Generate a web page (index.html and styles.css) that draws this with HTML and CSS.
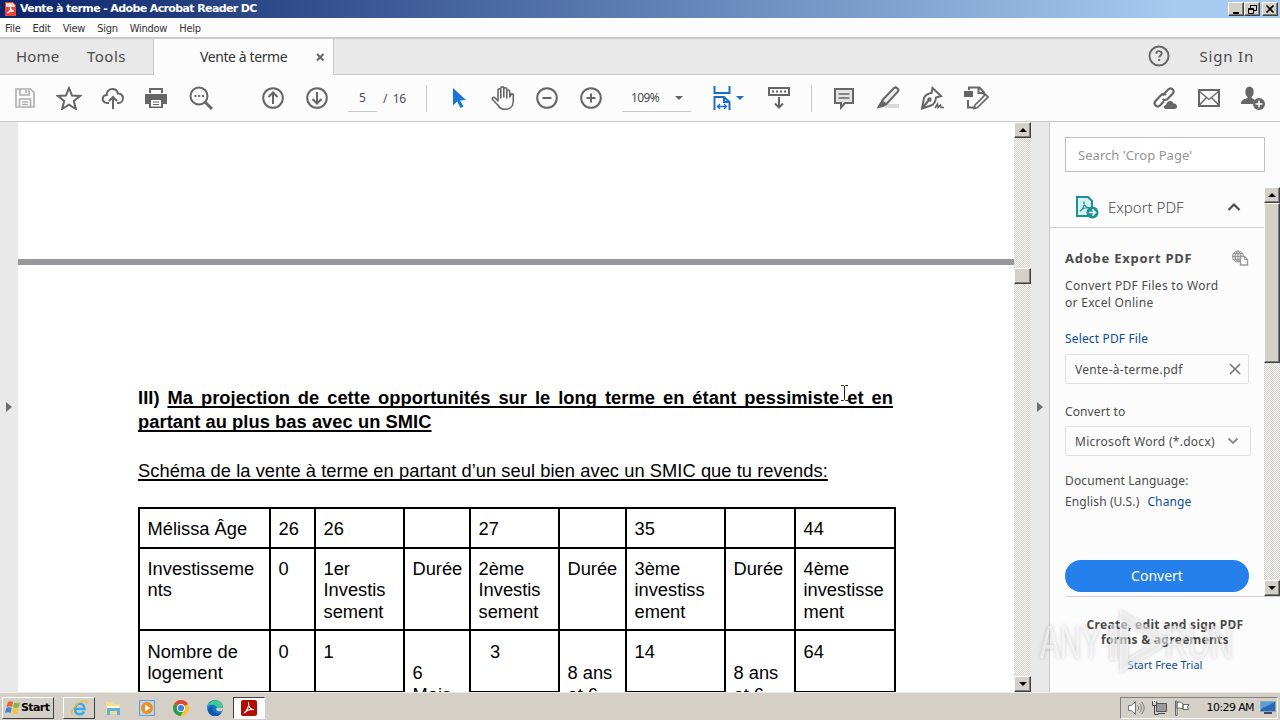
FILE: index.html
```html
<!DOCTYPE html>
<html lang="fr">
  <head>
    <meta charset="utf-8">
    <meta name="viewport" content="width=device-width, initial-scale=1">
    <title>Vente à terme - Adobe Acrobat Reader DC</title>
    <link rel="stylesheet" href="styles.css">
  </head>
  <body>
    <header class="titlebar">
      <svg class="app-icon" width="11" height="14" viewBox="0 0 11 14"><path d="M0 0h8l3 3v11H0z" fill="#e8443a"/><path d="M1 1h6.500l2.500 2.500V5H1z" fill="#fbd9d5"/><path d="M2.500 11c2-1 3.500-4 3-7-1 1 1 5 3.500 5-3-.5-5 .5-6.500 2z" fill="none" stroke="#fff" stroke-width="1.100"/></svg>
      <span class="title">Vente à terme - Adobe Acrobat Reader DC</span>
      <div class="window-buttons">
        <span class="win-btn"><svg width="15" height="13" viewBox="0 0 15 13"><path d="M4 9h6v2H4z"/></svg></span>
        <span class="win-btn"><svg width="15" height="13" viewBox="0 0 15 13" fill="none" stroke="#000"><path d="M5.500 5V2.500h6v5H9M5 2.500h7M3.500 5.500h5v5h-5zM3 6.500h6"/></svg></span>
        <span class="win-btn last"><svg width="15" height="13" viewBox="0 0 15 13"><path d="M3.500 2.500l7 7M10.500 2.500l-7 7" stroke="#000" stroke-width="1.700"/></svg></span>
      </div>
    </header>

    <nav class="menubar">
      <span>File</span><span>Edit</span><span>View</span><span>Sign</span><span>Window</span><span>Help</span>
    </nav>

    <div class="tabs">
      <div class="tabs-left"><span class="home">Home</span><span class="tools">Tools</span></div>
      <div class="tab-active"><span>Vente à terme</span><svg width="9" height="9" viewBox="0 0 9 9"><path d="M1 1l6.500 6.500M7.500 1L1 7.500" stroke="#666" stroke-width="2"/></svg></div>
      <div class="tabs-right">
        <svg width="22" height="22" viewBox="0 0 22 22" fill="none" stroke="#666" stroke-width="1.900"><circle cx="11" cy="11" r="9.500"/><path d="M8.300 8.800c0-3.600 5.400-3.400 5.400-.3 0 1.900-2.500 2-2.500 4M11.200 14v2"/></svg>
        <span class="sign-in">Sign In</span>
      </div>
    </div>

    <div class="toolbar">
      <span class="tool disabled"><svg width="24" height="24" viewBox="0 0 24 24"><path d="M3 3h14.500L21 6.500V21H3zM7 3v6h9V3M13 4v3M6.500 21v-8h11v8M9 16h6M9 18.500h6" stroke-width="1.700"/></svg></span>
      <span class="tool"><svg width="26" height="24" viewBox="0 0 26 24"><path d="M13 2l3 7.600 8 .4-6.200 5.100 2.100 7.900L13 18.600 6.100 23l2.100-7.900L2 10l8-.4z"/></svg></span>
      <span class="tool"><svg width="24" height="24" viewBox="0 0 24 24"><path d="M8 17H6.500C3 17 1.500 14.500 1.700 12.500c.2-2 1.800-3.600 4-3.600C5.500 5.500 8 3 11.500 3c3 0 4.800 1.800 5.300 4.500 3-.2 5.200 1.700 5.200 4.600 0 2.700-2 4.900-4.500 4.900H16M12 23V11M8 15l4-4 4 4"/></svg></span>
      <span class="tool printer"><svg width="24" height="24" viewBox="0 0 24 24"><path d="M5 2h14v5H5zM1 8h22v10h-4v4H5v-4H1z" fill="#666" stroke="none"/><path d="M7 4h10v4H7zM7 14h10v6.500H7z" fill="#fcfcfc" stroke="none"/><path d="M9 16h6M9 18.500h6" stroke-width="1.200"/></svg></span>
      <span class="tool"><svg width="26" height="26" viewBox="0 0 26 26"><circle cx="11" cy="11" r="8.500"/><path d="M17 17l7 7" stroke-width="3"/><path d="M6.500 11h2M10.300 11h2M14 11h2"/></svg></span>
      <span class="tool gap-pages"><svg width="24" height="24" viewBox="0 0 24 24"><circle cx="12" cy="12" r="9.800"/><path d="M12 18V7M7.500 11L12 6.500l4.500 4.500"/></svg></span>
      <span class="tool"><svg width="24" height="24" viewBox="0 0 24 24"><circle cx="12" cy="12" r="9.800"/><path d="M12 6v11M7.500 13l4.500 4.500 4.500-4.500"/></svg></span>
      <span class="page-input">5</span>
      <span class="page-total">/&nbsp; 16</span>
      <i class="divider"></i>
      <span class="tool gap-select"><svg width="24" height="24" viewBox="0 0 24 24"><path d="M6 2l13 12-6 .5 3.500 6-3 1.500-3.300-6.500L6 19.500z" fill="#1a73d8" stroke="none"/></svg></span>
      <span class="tool"><svg width="26" height="26" viewBox="0 0 26 26"><path d="M8.500 15V5.300c0-2 2.800-2 2.800 0V13M11.300 12V3.500c0-2.200 3-2.200 3 0V12M14.300 12V4.300c0-2 3-2 3 0V13M17.300 12V6.500c.2-2 3-2 3 .2V12l1-2c1.200-2 3-.8 2.500.8V16c0 5-3 8.300-8 8.300-4 0-6-1.500-7.500-4.300L3 14.500c-1-2 1.400-3 2.700-1.500l2.800 3" transform="translate(-.5)" stroke-linecap="round" stroke-linejoin="round" stroke-width="1.600"/></svg></span>
      <span class="tool"><svg width="24" height="24" viewBox="0 0 24 24"><circle cx="12" cy="12" r="9.800"/><path d="M7.500 12h9"/></svg></span>
      <span class="tool"><svg width="24" height="24" viewBox="0 0 24 24"><circle cx="12" cy="12" r="9.800"/><path d="M7.500 12h9M12 7.500v9"/></svg></span>
      <span class="zoom-input"><span>109%</span><i class="caret"></i></span>
      <span class="tool fit"><svg width="18" height="26" viewBox="0 0 18 26"><path d="M1.500 1v7h15V1M1.500 25V12H11l5.500 5v8M11 12v5h5"/><path d="M4.500 21.500h9M7 19l-2.500 2.500L7 24M11 19l2.500 2.500L11 24" stroke-width="1.300"/></svg><i class="caret blue"></i></span>
      <span class="tool"><svg width="24" height="24" viewBox="0 0 24 24"><path d="M2 2h20v7H2zM12 11v10M8 17.500l4 4 4-4"/><path d="M5 5.500h14" stroke-dasharray="2 2"/></svg></span>
      <i class="divider second"></i>
      <span class="tool gap-comment"><svg width="24" height="24" viewBox="0 0 24 24"><path d="M3 3h18v14h-8l-4 4.500V17H3z" fill="#e4e4e4"/><path d="M6.500 8h11M6.500 12h11" stroke-width="1.300"/></svg></span>
      <span class="tool"><svg width="26" height="26" viewBox="0 0 26 26"><path d="M10 19h14v4H10z" fill="#dadada" stroke="none"/><path d="M7.500 15L19 3c2-1.700 5.500 1 4 3.500L12 18.500c-1.500 1-5.200-1-4.500-3.500z" fill="#eee"/><path d="M6.500 15l6 4.500L8.500 22 1.500 23.500z" fill="#666" stroke="none"/></svg></span>
      <span class="tool"><svg width="26" height="26" viewBox="0 0 26 26"><path d="M13.500 3l8.500 8-5 1.500c-.5 5-2 7-5 8L3 23.500 5 13c1.500-3.500 4-4.500 7.500-5zM3 23.500l6.500-8"/><circle cx="10.500" cy="14.500" r="1.200"/><path d="M16 23l2.500-4 .5 3.500 2.500-2.500.5 2.500h3" stroke-width="1.600"/></svg></span>
      <span class="tool"><svg width="26" height="26" viewBox="0 0 26 26"><path d="M6 5V2.500h10.500L21 7.500V10M15.500 3v5H21M5 15v7.500h7"/><path d="M1 6h9v6H1z" fill="#666" stroke="none"/><path d="M12 20L22.500 9.500l2.500 2.500L14.500 22.500 11 23.500z" fill="#fcfcfc" stroke-width="1.700"/></svg></span>
      <span class="tool gap-share"><svg width="26" height="26" viewBox="0 0 26 26"><path d="M10.500 10.500l5.700-6c3-3 7.300 1 4.600 4L15.500 14c-1.600 1.500-3.700 1.200-4.700 0M14 10c-1.500-1.700-3.500-1.300-4.800 0L3.500 16c-2.700 3.200 1.500 7.300 4.500 4.500l4-4.200" stroke-width="2.200"/><path d="M14 24c-3 0-2.700-4 0-4 .5-5 7-5 7.500-1.500 4-.5 5 5.500 1 5.500z" fill="#666" stroke="none"/></svg></span>
      <span class="tool"><svg width="24" height="24" viewBox="0 0 24 24"><path d="M2 4h20v16H2z"/><path d="M2 5l10 8.500L22 5M2 19.500l7.500-8M22 19.500l-7.500-8" stroke-width="1.300"/></svg></span>
      <span class="tool"><svg width="26" height="26" viewBox="0 0 26 26"><g fill="#666" stroke="none"><ellipse cx="9.500" cy="7" rx="4.200" ry="5.500"/><path d="M1 19c0-4.500 3-4.500 6.500-6v-2h4v2l3 1.500-1.500 4.500z"/><circle cx="19" cy="19" r="6"/></g><path d="M15.500 19h7M19 15.500v7" stroke="#fff" stroke-width="1.500"/></svg></span>
    </div>

    <main class="workspace">
      <div class="rail left"><i class="arrow-right"></i></div>
      <section class="document">
        <div class="page previous"></div>
        <article class="page current">
          <h1>III) <u>Ma projection de cette opportunités sur le long terme en étant pessimiste et en partant au plus bas avec un SMIC</u></h1>
          <p class="intro"><u>Schéma de la vente à terme en partant d’un seul bien avec un SMIC que tu revends:</u></p>
          <div class="plan">
            <div>Mélissa Âge</div><div>26</div><div>26</div><div></div><div>27</div><div></div><div>35</div><div></div><div>44</div>
            <div>Investisseme<br>nts</div><div>0</div><div>1er<br>Investis<br>sement</div><div>Durée</div><div>2ème<br>Investis<br>sement</div><div>Durée</div><div>3ème<br>investiss<br>ement</div><div>Durée</div><div>4ème<br>investisse<br>ment</div>
            <div>Nombre de<br>logement</div><div>0</div><div>1</div><div class="open"><br>6<br>Mois</div><div class="indent">3</div><div class="open"><br>8 ans<br>et 6</div><div>14</div><div class="open"><br>8 ans<br>et 6</div><div>64</div>
          </div>
        </article>
        <svg class="ibeam" width="9" height="18" viewBox="0 0 9 18"><path d="M1 1.500h2.500l1 1 1-1H8M4.500 2v13M1 16.500h2.500l1-1 1 1H8" fill="none" stroke="#222"/></svg>
      </section>
      <div class="scrollbar doc-scroll">
        <span class="sb-btn"><i class="up"></i></span>
        <span class="sb-thumb small"></span>
        <span class="sb-btn end"><i class="down"></i></span>
      </div>
      <div class="rail right"><i class="arrow-right"></i></div>
      <aside class="panel">
        <div class="search">Search 'Crop Page'</div>
        <div class="panel-scroll">
          <div class="panel-content">
            <div class="export-head">
              <svg width="24" height="24" viewBox="0 0 24 24" fill="none"><path d="M2 2h11l4 4v15H2z" fill="#d5f1f1" stroke="#1b9193" stroke-width="2"/><path d="M5 16c3-1.500 5-6 4-9.500-.5 3 2 6.500 5.500 6-4 0-7 1-9.500 3.500z" stroke="#1b9193" stroke-width="1.200"/><circle cx="17.500" cy="17.500" r="6" fill="#1b9193"/><path d="M14 17.500h6M17.500 14.500l3 3-3 3" stroke="#fff" stroke-width="1.700"/></svg>
              <span>Export PDF</span>
              <svg width="14" height="10" viewBox="0 0 14 10"><path d="M1.500 8L7 2.500 12.500 8" fill="none" stroke="#4b4b4b" stroke-width="2.200"/></svg>
            </div>
            <div class="export-body">
              <div class="export-title"><b>Adobe Export PDF</b><svg width="18" height="16" viewBox="0 0 18 16" fill="none" stroke="#999"><circle cx="7" cy="6.500" r="5.500" fill="#ddd"/><path d="M1.500 6.500h11M7 1v11M3 3.500h8M3 9.500h8M7 1C3 4 3 9 7 12M7 1c4 3 4 8 0 11"/><path d="M9.500 6.500h4l3 3v5.500h-7z" fill="#fff" stroke-width="1.300"/><path d="M13.500 6.500v3h3"/></svg></div>
              <p class="pitch">Convert PDF Files to Word<br>or Excel Online</p>
              <a class="select-file">Select PDF File</a>
              <div class="field file"><span>Vente-à-terme.pdf</span><svg width="12" height="12" viewBox="0 0 12 12"><path d="M1 1l10 10M11 1L1 11" stroke="#777" stroke-width="1.600"/></svg></div>
              <div class="label convert-to">Convert to</div>
              <div class="field format"><span>Microsoft Word (*.docx)</span><svg width="12" height="8" viewBox="0 0 12 8"><path d="M1.500 1.500L6 6l4.500-4.500" fill="none" stroke="#888" stroke-width="1.800"/></svg></div>
              <div class="label language">Document Language:</div>
              <div class="label value"><span class="english">English (U.S.)</span><a class="change">Change</a></div>
              <div class="convert"><span>Convert</span></div>
            </div>
          </div>
          <div class="scrollbar panel-bar">
            <span class="sb-btn"><i class="up"></i></span>
            <span class="sb-thumb large"></span>
            <span class="sb-btn end"><i class="down"></i></span>
          </div>
        </div>
        <footer class="promo">
          <b><span class="promo-a">Create, edit and sign PDF</span><br><span class="promo-b">forms &amp; agreements</span></b>
          <a>Start Free Trial</a>
        </footer>
      </aside>
    </main>

    <svg class="watermark" width="204" height="70" viewBox="0 0 204 70">
      <g fill="#fff" fill-opacity=".55" font-family="Liberation Sans" font-size="46">
        <text x="4" y="52" textLength="61" lengthAdjust="spacingAndGlyphs">ANY</text>
        <text x="129" y="52" textLength="68" lengthAdjust="spacingAndGlyphs">RUN</text>
        <path d="M84 4l52 31-52 32zM92 18v35l28-18z" fill-rule="evenodd"/>
        <path d="M74 18h7v36h-7z"/>
      </g>
    </svg>

    <footer class="taskbar">
      <span class="start"><svg width="16" height="16" viewBox="0 0 16 16"><path d="M3 2c2-1.300 3.500-1 5 0L7 7C5.500 6 4 6 1.500 7z" fill="#e8642d"/><path d="M9 2.500c2 1 4 1 6-.2L13.800 7c-2 1.200-4 1.200-5.600.4z" fill="#7fb643"/><path d="M1.300 8C3.500 7 5 7 6.700 8l-1.200 5c-1.500-1-3-1-5.500 0z" fill="#3c84d8"/><path d="M8 8.300c2 1 3.700 1 5.600 0L12.300 13c-2 1-4 1-5.600.2z" fill="#f5c431"/></svg><b>Start</b></span>
      <span class="task raised"><svg width="18" height="18" viewBox="0 0 18 18" fill="none"><path d="M14 12.500c-1.500 4-9 4-9-2.500 0-7 9.500-7 9.500 0H6" stroke="#3aaae5" stroke-width="2.500"/><path d="M2.500 16C-1 11 12-1 16.500 2.500c1 1 .2 2.500-.5 3.500" stroke="#f0bd3c" stroke-width="1.300"/></svg></span>
      <span class="task"><svg width="18" height="16" viewBox="0 0 18 16"><path d="M2 2h6l1.500 2H16v10H2z" fill="#f2dd91"/><path d="M3 6h12v3H3z" fill="#fffbe4"/><path d="M3 8h13v7h-3v-4H6v4H3z" fill="#62afd9"/></svg></span>
      <span class="task"><svg width="16" height="16" viewBox="0 0 16 16"><path d="M.5.500h15v15H.5z" fill="#b8d6ee" stroke="#6f9ac2"/><circle cx="8" cy="8" r="6" fill="#f28a1c"/><path d="M6 4.500v7L11.500 8z" fill="#fff"/></svg></span>
      <span class="task"><svg width="16" height="16" viewBox="0 0 16 16"><circle cx="8" cy="8" r="8" fill="#f8c623"/><path d="M8 8L1.100 4A8 8 0 0 1 15 4z" fill="#de4536"/><path d="M1.100 4A8 8 0 0 0 7.500 16L11 10 8 8z" fill="#25a151"/><circle cx="8" cy="8" r="4" fill="#fff"/><circle cx="8" cy="8" r="3.100" fill="#3f7de8"/></svg></span>
      <span class="task"><svg width="16" height="16" viewBox="0 0 16 16"><circle cx="8" cy="8" r="8" fill="#1678cc"/><path d="M.5 6C3-1 15-2 16 7c0 4-5 4-6 2.500C11.500 6 6 3 .5 6z" fill="#41cb91"/><path d="M6 7c-2 3 1 7 8.500 6C10 19 2 16 1.200 11 1 8 3.500 6 6 7z" fill="#1457a8"/><path d="M9.500 8c-1 2 .5 4 5.500 3l1-3z" fill="#d4d0c8"/></svg></span>
      <span class="task pressed"><svg width="16" height="16" viewBox="0 0 16 16"><rect width="16" height="16" rx="2" fill="#b30b00"/><path d="M3 13c3-2 5.500-7 4.500-10.500C7 6 9.500 10 13 9.500 9 9 6 10 3 13z" fill="none" stroke="#fff" stroke-width="1.200"/></svg></span>
      <div class="tray">
        <svg width="18" height="16" viewBox="0 0 18 16" fill="none" stroke="#777"><path d="M1.500 5.500h3l4-4v13l-4-4h-3z" fill="#fff"/><path d="M10.500 5.500c1.500 1.500 1.500 3.500 0 5M12.500 3.500c2.500 2.500 2.500 6.500 0 9M14.500 2c3.500 3.500 3.500 8.500 0 12"/></svg>
        <svg width="17" height="16" viewBox="0 0 17 16" fill="none" stroke="#555"><path d="M5.500 3.500h10v8h-10z" fill="#9a9a9a"/><path d="M7 13.500h7M1.500 1.500h4v4h-4zM3.500 5.500v9h4" stroke="#444"/><path d="M2.500 0v3M4.500 0v3" stroke="#fff"/></svg>
        <svg width="17" height="16" viewBox="0 0 17 16" fill="#fff" stroke="#666"><path d="M1.500 1v14.500h1.500V1zM3 2.500c3-1 4 0 6 1V9c-2-.5-3.500-1.500-6-.5zM9 4.500h6L13.500 7l1 2.500H9z"/></svg>
        <span class="clock">10:29 AM</span>
        <svg width="16" height="13" viewBox="0 0 16 13"><path d="M.5.500h15v10H.5z" fill="#2b68b8" stroke="#8aa"/><path d="M1 1h14L1 8z" fill="#5d9be0"/><path d="M4 11h8v2H4z" fill="#446"/></svg>
      </div>
    </footer>
  </body>
</html>
```
FILE: styles.css
```css
* {
  box-sizing: border-box;
}

body {
  margin: 0;
  width: 1280px;
  height: 720px;
  overflow: hidden;
  display: flex;
  flex-direction: column;
  font-family: "Noto Sans", sans-serif;
  color: #4b4b4b;
  background: #fcfcfc;
  white-space: nowrap;
}

svg {
  display: block;
  flex: none;
}

/* window chrome */
.titlebar {
  height: 18px;
  flex: none;
  display: flex;
  align-items: center;
  padding: 0 2px 0 5px;
  background: linear-gradient(90deg, #0a246a, #a6caf0 92%);
}

.title {
  margin-left: 4px;
  font: bold 11px/18px "DejaVu Sans", sans-serif;
  letter-spacing: -0.62px;
  color: #fff;
}

.window-buttons {
  display: flex;
  margin-left: auto;
}

.win-btn,
.sb-btn,
.sb-thumb {
  background: #d4d0c8;
  border: 1px solid;
  border-color: #fff #404040 #404040 #fff;
  box-shadow: inset -1px -1px #808080;
}

.win-btn {
  width: 16px;
  height: 14px;
  overflow: hidden;
}

.last {
  margin-left: 2px;
}

.menubar {
  height: 19px;
  flex: none;
  display: flex;
  gap: 12px;
  padding-left: 5px;
  font: 11px/21px "DejaVu Sans Condensed", "DejaVu Sans", sans-serif;
  letter-spacing: -0.25px;
  color: #333;
}

.tabs {
  height: 38px;
  flex: none;
  display: flex;
  border-top: 2px solid #cbcbcb;
  font-size: 15px;
  line-height: 34px;
}

.tabs-left,
.tabs-right {
  background: #e9e9e9;
  border-bottom: 1px solid #c8c8c8;
  display: flex;
}

.tabs-left {
  width: 154px;
  padding-left: 16px;
  border-right: 1px solid #c8c8c8;
  letter-spacing: 0.2px;
}

.home {
  width: 71px;
}

.tools {
  letter-spacing: 0.5px;
}

.tab-active {
  width: 179px;
  padding: 0 8px 0 46px;
  display: flex;
  justify-content: space-between;
  align-items: center;
  font-size: 14px;
  letter-spacing: -0.4px;
  color: #333;
}

.tabs-right {
  flex: 1;
  border-left: 1px solid #c8c8c8;
  padding-right: 26px;
  justify-content: flex-end;
}

.tabs-right svg {
  margin-top: 6px;
}

.sign-in {
  margin-left: 30px;
  letter-spacing: 0.8px;
}

.toolbar {
  height: 47px;
  flex: none;
  display: flex;
  align-items: center;
  padding-left: 3px;
  border-bottom: 1px solid #c8c8c8;
  font-size: 12px;
}

.tool {
  width: 44px;
  flex: none;
  display: flex;
  justify-content: center;
  align-items: center;
}

.tool svg {
  fill: none;
  stroke: #666;
  stroke-width: 2;
}

.tool.fit svg {
  stroke: #1a6fc9;
}

.printer {
  padding-right: 2px;
}

.disabled {
  opacity: 0.5;
}

.gap-pages {
  margin-left: 28px;
}

.page-input {
  width: 29px;
  margin-left: 9px;
  text-align: center;
  line-height: 27px;
  border-bottom: 1px solid #c8c8c8;
}

.page-total {
  width: 43px;
  margin-left: 6px;
  letter-spacing: -0.3px;
}

.divider {
  width: 1px;
  height: 27px;
  background: #c8c8c8;
}

.gap-select {
  margin-left: 10px;
}

.zoom-input {
  width: 69px;
  margin-left: 9px;
  padding: 0 8px 0 9px;
  display: flex;
  align-items: center;
  justify-content: space-between;
  line-height: 27px;
  letter-spacing: -0.6px;
  border-bottom: 1px solid #c8c8c8;
}

.caret {
  border: 4px solid transparent;
  border-top-color: #666;
  border-bottom: 0;
}

.caret.blue {
  border-top-color: #1a6fc9;
  margin-left: 5px;
}

.fit {
  margin-left: 15px;
}

.fit + .tool {
  margin-left: 7px;
}

.second {
  margin-left: 10px;
}

.gap-comment {
  margin-left: 10px;
}

.gap-share {
  margin-left: 145px;
}

/* document */
.workspace {
  height: 570px;
  flex: none;
  display: flex;
}

.rail {
  width: 18px;
  flex: none;
  display: flex;
  align-items: center;
  background: #e9e9e9;
}

.rail.left {
  padding-left: 6px;
}

.rail.right {
  width: 19px;
  padding-left: 6px;
  border-right: 1px solid #c8c8c8;
}

.arrow-right {
  border: 5px solid transparent;
  border-left: 6px solid #6e6e6e;
  border-right: 0;
}

.document {
  position: relative;
  width: 996px;
  flex: none;
  overflow: hidden;
  background: #fff;
  color: #000;
  font: 18.3px/21.4px "Liberation Sans", Arial, sans-serif;
}

.previous {
  height: 143px;
  border-bottom: 6px solid #99979b;
}

.current {
  padding: 121px 0 0 120px;
}

.current u {
  text-decoration-thickness: 2px;
  text-underline-offset: 2px;
  text-decoration-skip-ink: none;
}

h1 {
  width: 755px;
  margin: 0;
  font-size: 18.3px;
  line-height: 24px;
  letter-spacing: 0.06px;
  text-align: justify;
  white-space: normal;
}

.intro {
  margin: 25px 0 0;
  line-height: 24px;
  letter-spacing: 0.06px;
}

.plan {
  display: grid;
  grid-template-columns: 131px 45px 89px 66px 89px 67px 99px 70px 102px;
  grid-template-rows: 40px 82px 63px;
  width: 758px;
  margin-top: 24px;
}

.plan div {
  padding: 9px 0 0 7.5px;
  border: solid #000;
  border-width: 2px 0 0 2px;
  overflow: hidden;
}

.plan div:nth-child(9n) {
  border-right-width: 2px;
}

.plan div:nth-child(n + 19) {
  padding-top: 10px;
  border-bottom-width: 1px;
}

.plan div.open {
  border-bottom: 0;
}

.plan div.indent {
  padding-left: 19px;
}

.ibeam {
  position: absolute;
  left: 822px;
  top: 262px;
}

/* classic scrollbars */
.scrollbar {
  width: 17px;
  flex: none;
  display: flex;
  flex-direction: column;
  background: repeating-conic-gradient(#d4d0c8 0 25%, #fff 0 50%) 0 0 / 2px 2px;
}

.sb-btn {
  height: 16px;
  flex: none;
  display: flex;
  align-items: center;
  justify-content: center;
}

.end {
  margin-top: auto;
}

.up,
.down {
  border: 4px solid transparent;
}

.up {
  border-top: 0;
  border-bottom-color: #000;
}

.down {
  border-bottom: 0;
  border-top-color: #000;
}

.small {
  height: 16px;
  margin-top: 130px;
}

.large {
  height: 160px;
}

/* tools panel */
.panel {
  width: 230px;
  flex: none;
  display: flex;
  flex-direction: column;
  background: #fcfcfc;
  font-size: 12px;
}

.search {
  height: 35px;
  flex: none;
  margin: 15px 15px 0;
  padding-left: 12px;
  border: 1px solid #c0c0c0;
  background: #fff;
  font-size: 13px;
  line-height: 34px;
  letter-spacing: 0.05px;
  color: #959595;
}

.panel-scroll {
  height: 409px;
  flex: none;
  margin-top: 15px;
  display: flex;
}

.panel-content {
  width: 214px;
  flex: none;
}

.panel-bar {
  width: 16px;
}

.export-head {
  height: 41px;
  padding: 0 23px 0 25px;
  display: flex;
  align-items: center;
  border-bottom: 1px solid #d0d0d0;
  font-size: 15px;
  font-weight: 300;
}

.export-head span {
  margin: 0 auto 0 9px;
}

.export-body {
  height: 368px;
  padding: 20px 15px 0;
  display: flex;
  flex-direction: column;
}

.export-title {
  height: 20px;
  display: flex;
  justify-content: space-between;
  align-items: center;
  font-size: 13px;
  letter-spacing: 0.75px;
}

.pitch {
  margin: 9px 0 0;
  line-height: 17px;
  letter-spacing: 0.3px;
}

a {
  color: #0d4f96;
}

.select-file {
  margin-top: 19px;
  line-height: 17px;
  letter-spacing: 0.15px;
}

.field {
  display: flex;
  align-items: center;
  justify-content: space-between;
  border: 1px solid #e0e0e0;
  border-radius: 2px;
  height: 30px;
  flex: none;
  letter-spacing: 0.28px;
}

.file {
  width: 184px;
  margin-top: 7px;
  padding: 0 7px 0 9px;
}

.convert-to {
  margin-top: 19px;
}

.format {
  width: 186px;
  margin-top: 6px;
  padding: 0 11px 0 9px;
}

.label {
  line-height: 17px;
  letter-spacing: 0.12px;
}

.language {
  margin-top: 16px;
}

.value {
  margin-top: 4px;
}

.change {
  margin-left: 8px;
}

.convert {
  width: 184px;
  height: 32px;
  flex: none;
  margin: 50px 0 4px;
  border-radius: 16px;
  background: #2680eb;
  color: #fff;
  font-size: 14px;
  line-height: 31px;
  text-align: center;
}

.promo {
  flex: 1;
  margin-left: 15px;
  padding: 20px 15px 0 0;
  border-top: 1px solid #d0d0d0;
  text-align: center;
  line-height: 15px;
}

.promo b {
  letter-spacing: 0.3px;
}

.promo a {
  display: block;
  margin-top: 10px;
  font-size: 11px;
}

.watermark {
  position: absolute;
  left: 1036px;
  top: 606px;
  filter: drop-shadow(0 0 2px rgba(0, 0, 0, 0.35));
}

/* taskbar */
.taskbar {
  height: 28px;
  flex: none;
  display: flex;
  align-items: center;
  padding: 2px 2px 0;
  border-top: 1px solid #eceae5;
  background: #d4d0c8;
}

.start {
  width: 52px;
  height: 22px;
  padding-left: 2px;
  margin-right: 9px;
  display: flex;
  align-items: center;
  border: 1px solid;
  border-color: #fff #404040 #404040 #fff;
  font: 11px "DejaVu Sans", sans-serif;
  letter-spacing: -0.6px;
  color: #000;
}

.task {
  width: 32px;
  height: 22px;
  margin-right: 2px;
  display: flex;
  align-items: center;
  justify-content: center;
}

.raised {
  border: 1px solid;
  border-color: #fff #404040 #404040 #fff;
}

.pressed {
  border: 1px solid;
  border-color: #404040 #fff #fff #404040;
  background: #fff;
}

.tray {
  width: 158px;
  height: 22px;
  margin-left: auto;
  padding: 0 1px 0 6px;
  display: flex;
  align-items: center;
  gap: 6px;
  border: 1px solid;
  border-color: #808080 #fff #fff #808080;
}

.clock {
  margin: 0 0 0 auto;
  font: 11px "DejaVu Sans", sans-serif;
  letter-spacing: -0.6px;
  color: #000;
}
```
